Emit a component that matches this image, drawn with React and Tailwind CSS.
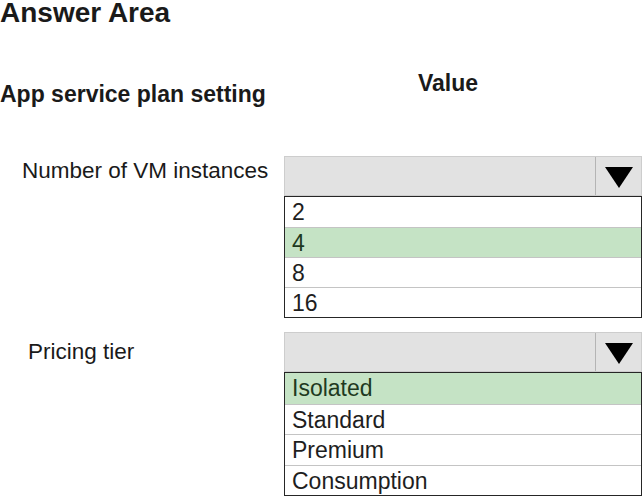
import React from "react";

const vmOptions = ["2", "4", "8", "16"];
const tierOptions = ["Isolated", "Standard", "Premium", "Consumption"];

function Arrow() {
  return (
    <svg width="28" height="21" viewBox="0 0 28 21">
      <polygon points="0,0 28,0 14,21" fill="#000" />
    </svg>
  );
}

function Dropdown({ options, selected, rowH }) {
  return (
    <div className="w-[358px]">
      <div className="flex h-[40px] bg-[#e2e2e2] border border-[#cdcdcd]">
        <div className="flex-1" />
        <div className="w-[46px] border-l border-[#b4b4b4] flex items-center justify-center pt-[2px]">
          <Arrow />
        </div>
      </div>
      <div className="border-[1.5px] border-[#262626] bg-white">
        {options.map((opt, i) => (
          <div
            key={opt}
            className={`pl-[7px] text-[23px] ${rowH} ${
              i > 0 ? "border-t border-[#c4c4c4]" : ""
            } ${opt === selected ? "bg-[#c5e3c5] text-[#1f3a1f]" : "text-[#1e1e1e]"}`}
          >
            {opt}
          </div>
        ))}
      </div>
    </div>
  );
}

export default function App() {
  return (
    <div className="w-[644px] h-[499px] bg-white font-['Liberation_Sans',Arial,sans-serif] text-[#1a1a1a]">
      <h1 className="text-[28px] font-bold leading-[26px]">Answer Area</h1>

      <div className="grid grid-cols-[284px_1fr] items-start mt-[46px]">
        <div className="mt-[11px] text-[23px] font-bold leading-none">App service plan setting</div>
        <div className="pl-[134px] text-[23px] font-bold leading-none">Value</div>
      </div>

      <div className="grid grid-cols-[284px_1fr] items-start mt-[50px]">
        <div className="pl-[22px] pt-[4px] text-[22.5px] leading-none">Number of VM instances</div>
        <Dropdown options={vmOptions} selected="4" rowH="h-[30px] leading-[30px]" />
      </div>

      <div className="grid grid-cols-[284px_1fr] items-start mt-[14px]">
        <div className="pl-[28px] pt-[9px] text-[22.5px] leading-none">Pricing tier</div>
        <Dropdown options={tierOptions} selected="Isolated" rowH="h-[30.5px] leading-[30.5px]" />
      </div>
    </div>
  );
}
